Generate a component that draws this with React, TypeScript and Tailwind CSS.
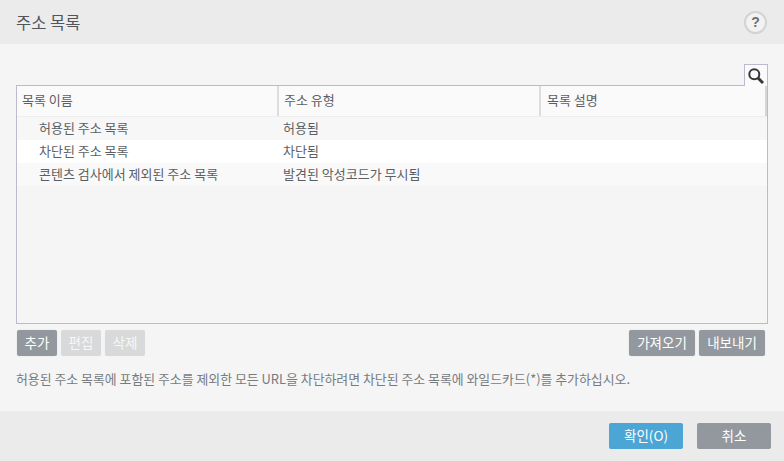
import React from "react";

const rows = [
  { a: "허용된 주소 목록", b: "허용됨", bg: "bg-[#f7f7f7]" },
  { a: "차단된 주소 목록", b: "차단됨", bg: "bg-white" },
  { a: "콘텐츠 검사에서 제외된 주소 목록", b: "발견된 악성코드가 무시됨", bg: "bg-[#f9f9f9]" },
];

export default function App() {
  return (
    <div className="w-[784px] h-[461px] overflow-hidden flex flex-col bg-[#f5f5f5] text-[#5a5f65] text-[13px] font-['Noto_Sans_CJK_KR','Noto_Sans',sans-serif]">
      <header className="h-[44px] shrink-0 bg-[#ebebeb] flex items-center justify-between pl-[16px] pr-[17px]">
        <h1 className="text-[16.5px] font-normal text-[#50555b] leading-none">주소 목록</h1>
        <div className="w-[23px] h-[23px] rounded-full border-2 border-[#d3d3d3] bg-[#f2f2f2] flex items-center justify-center text-[14px] font-bold text-[#6b6f73] leading-none font-['Liberation_Sans',sans-serif]">?</div>
      </header>

      <main className="flex-1 flex flex-col px-[16px] pt-[20px]">
        <div className="flex justify-end">
          <div className="w-[24px] h-[22px] -mb-px z-10 border border-b-0 border-[#bdb9cf] bg-[#fafafa] flex items-center justify-center">
            <svg width="18" height="18" viewBox="0 0 18 18" fill="none">
              <circle cx="7.3" cy="7.3" r="5" stroke="#33363a" strokeWidth="2" />
              <path d="M11 11l5 5" stroke="#33363a" strokeWidth="3" />
            </svg>
          </div>
        </div>
        <div className="h-[239px] border border-[#bdb9cf] flex flex-col">
          <div className="h-[31px] shrink-0 bg-[#fafafa] border-b border-[#eeeeee] flex">
            <div className="w-[262px] border-r-[2px] border-[#dddddd] pl-[5px] pb-[2px] flex items-center">목록 이름</div>
            <div className="w-[262px] border-r-[2px] border-[#dddddd] pl-[5px] pb-[2px] flex items-center">주소 유형</div>
            <div className="flex-1 border-r-[2px] border-[#d5d5d5] pl-[6px] pb-[2px] flex items-center">목록 설명</div>
          </div>
          {rows.map((r) => (
            <div key={r.a} className={`h-[23px] pb-[2px] flex items-center ${r.bg}`}>
              <div className="w-[262px] pl-[22px]">{r.a}</div>
              <div className="pl-[4px]">{r.b}</div>
            </div>
          ))}
        </div>

        <div className="flex justify-between mt-[6px] pl-[1px] pr-[3px]">
          <div className="flex gap-[4px]">
            <button className="w-[40px] h-[26px] pb-[2px] rounded-[2px] bg-[#92989e] text-white text-[13.5px] shadow-[0_0_2px_#e0e0e0]">추가</button>
            <button className="w-[40px] h-[26px] pb-[2px] rounded-[2px] bg-[#d8d9da] text-[#f7f7f7] text-[13.5px] shadow-[0_0_2px_#eeeeee]">편집</button>
            <button className="w-[40px] h-[26px] pb-[2px] rounded-[2px] bg-[#d8d9da] text-[#f7f7f7] text-[13.5px] shadow-[0_0_2px_#eeeeee]">삭제</button>
          </div>
          <div className="flex gap-[4px]">
            <button className="w-[66px] h-[26px] pb-[2px] rounded-[2px] bg-[#92989e] text-white text-[13.5px] shadow-[0_0_2px_#e0e0e0]">가져오기</button>
            <button className="w-[66px] h-[26px] pb-[2px] rounded-[2px] bg-[#92989e] text-white text-[13.5px] shadow-[0_0_2px_#e0e0e0]">내보내기</button>
          </div>
        </div>

        <p className="mt-[14px] text-[#777b80] leading-[18px] text-[12.9px]">
          허용된 주소 목록에 포함된 주소를 제외한 모든 URL을 차단하려면 차단된 주소 목록에 와일드카드(*)를 추가하십시오.
        </p>
      </main>

      <footer className="h-[50px] shrink-0 bg-[#ebebeb] flex items-center justify-end gap-[14px] pr-[13px]">
        <button className="w-[74px] h-[26px] pb-[2px] rounded-[2px] bg-[#4ba5d5] text-white text-[13.5px]">확인(O)</button>
        <button className="w-[74px] h-[26px] pb-[2px] rounded-[2px] bg-[#92989e] text-white text-[13.5px]">취소</button>
      </footer>
    </div>
  );
}
